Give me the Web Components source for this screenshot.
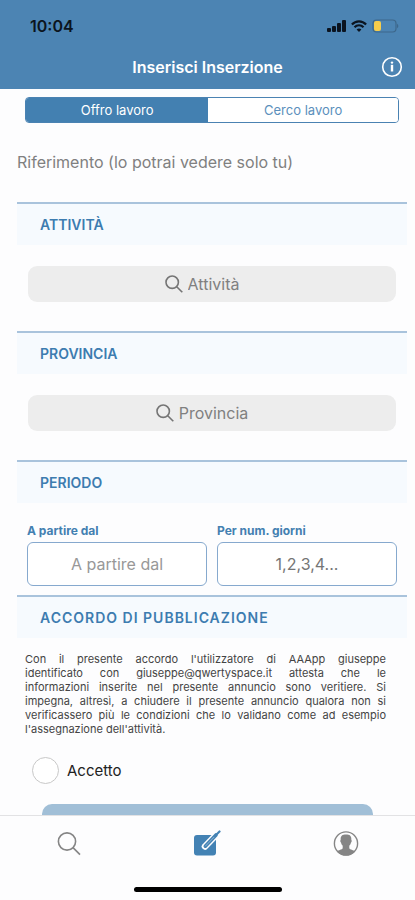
<!DOCTYPE html>
<html lang="it">
<head>
<meta charset="utf-8">
<meta name="viewport" content="width=device-width, initial-scale=1">
<title>Inserisci Inserzione</title>
<style>
  body {
    margin: 0;
    font-family: Inter, "Liberation Sans", sans-serif;
    color: #222;
    background: #fdfdfe;
  }
</style>
</head>
<body>
<app-shell>
  <status-bar slot="top" time="10:04"></status-bar>
  <nav-header slot="top">Inserisci Inserzione</nav-header>

  <segmented-control options="Offro lavoro,Cerco lavoro"></segmented-control>
  <reference-field placeholder="Riferimento (lo potrai vedere solo tu)"></reference-field>

  <form-section heading="ATTIVITÀ">
    <search-field label="Attività"></search-field>
  </form-section>
  <form-section heading="PROVINCIA">
    <search-field label="Provincia"></search-field>
  </form-section>
  <form-section heading="PERIODO">
    <period-fields>
      <text-field label="A partire dal" placeholder="A partire dal"></text-field>
      <text-field label="Per num. giorni" placeholder="1,2,3,4..." class="dark"></text-field>
    </period-fields>
  </form-section>
  <form-section heading="ACCORDO DI PUBBLICAZIONE" class="wide">
    <agreement-box>
      <span>Con il presente accordo l'utilizzatore di AAApp giuseppe</span>
      <span>identificato con giuseppe@qwertyspace.it attesta che le</span>
      <span>informazioni inserite nel presente annuncio sono veritiere. Si</span>
      <span>impegna, altresì, a chiudere il presente annuncio qualora non si</span>
      <span>verificassero più le condizioni che lo validano come ad esempio</span>
      <span>l'assegnazione dell'attività.</span>
    </agreement-box>
    <round-check>Accetto</round-check>
  </form-section>
  <submit-button></submit-button>

  <tab-bar slot="bottom"></tab-bar>
</app-shell>

<script>
class AppShell extends HTMLElement {
  constructor() {
    super();
    this.attachShadow({ mode: "open" });
    this.shadowRoot.innerHTML = `
      <style>
        :host {
          display: flex;
          flex-direction: column;
          height: 100vh;
        }
        header {
          background: #4c84b3;
        }
        main {
          flex: 1;
          min-height: 0;
          overflow-y: auto;
          scrollbar-width: none;
        }
      </style>
      <header><slot name="top"></slot></header>
      <main><slot></slot></main>
      <slot name="bottom"></slot>`;
  }
}

class StatusBar extends HTMLElement {
  constructor() {
    super();
    this.attachShadow({ mode: "open" });
    this.shadowRoot.innerHTML = `
      <style>
        :host {
          display: flex;
          align-items: center;
          justify-content: space-between;
          height: 36px;
          padding: 8px 16px 0 30px;
          color: #0b1420;
        }
        time {
          font-size: 16px;
          font-weight: 600;
        }
        .icons {
          display: flex;
          align-items: center;
          gap: 5px;
        }
        svg {
          display: block;
        }
      </style>
      <time>${this.getAttribute("time")}</time>
      <div class="icons">
        <svg width="19" height="12" viewBox="0 0 19 12" fill="currentColor">
          <rect x="0" y="8" width="4" height="4" rx="1"/>
          <rect x="5" y="6" width="4" height="6" rx="1"/>
          <rect x="10" y="3" width="4" height="9" rx="1"/>
          <rect x="15" y="0" width="4" height="12" rx="1"/>
        </svg>
        <svg width="16" height="12" viewBox="0 0 16 12" fill="none" stroke="currentColor" stroke-width="2.2">
          <path d="M.9 4.5C4.8.3 11.2.3 15.1 4.5"/>
          <path d="M3.5 7.2c2.5-2.6 6.5-2.6 9 0"/>
          <path d="M8 12 5.6 9.5c1.4-1.3 3.4-1.3 4.8 0Z" fill="currentColor" stroke="none"/>
        </svg>
        <svg width="27" height="14" viewBox="0 0 27 14">
          <rect x="1" y="1" width="23" height="12" rx="3.5" fill="none" stroke="#3d678b" stroke-width="1.2"/>
          <path d="M25 4.8c1.8.8 1.8 3.6 0 4.4Z" fill="#3d678b"/>
          <rect x="2" y="2" width="7" height="10" rx="2" fill="#f6cd4c"/>
        </svg>
      </div>`;
  }
}

class NavHeader extends HTMLElement {
  constructor() {
    super();
    this.attachShadow({ mode: "open" });
    this.shadowRoot.innerHTML = `
      <style>
        :host {
          display: grid;
          grid-template-columns: 1fr auto 1fr;
          align-items: center;
          height: 45px;
          padding: 0 12px;
          color: #fff;
        }
        h1 {
          grid-column: 2;
          margin: 0;
          font-size: 16px;
          font-weight: 600;
        }
        button {
          justify-self: end;
          padding: 0;
          border: 0;
          background: none;
          color: inherit;
        }
        svg {
          display: block;
        }
      </style>
      <h1><slot></slot></h1>
      <button type="button">
        <svg width="22" height="22" viewBox="0 0 22 22" fill="none" stroke="currentColor">
          <circle cx="11" cy="11" r="9.3" stroke-width="1.6"/>
          <path d="M11 8.8v6.7" stroke-width="2.4"/>
          <circle cx="11" cy="6.6" r="1.2" fill="currentColor" stroke="none"/>
        </svg>
      </button>`;
  }
}

class SegmentedControl extends HTMLElement {
  constructor() {
    super();
    this.attachShadow({ mode: "open" });
    const options = this.getAttribute("options").split(",");
    this.shadowRoot.innerHTML = `
      <style>
        :host {
          display: grid;
          grid-template-columns: 49fr 51fr;
          height: 24px;
          margin: 8px 16px 0 25px;
          border: 1px solid #4a82b2;
          border-radius: 4px;
          overflow: hidden;
        }
        button {
          padding: 0;
          border: 0;
          background: #fff;
          color: #5b8fbc;
          font: 13px Inter, sans-serif;
        }
        button[aria-pressed="true"] {
          background: #4380b1;
          color: #fff;
        }
      </style>
      ${options.map((o, i) => `<button type="button" aria-pressed="${i === 0}">${o}</button>`).join("")}`;
    this.shadowRoot.querySelectorAll("button").forEach(b => b.addEventListener("click", this._select));
  }

  _select = e => {
    this.shadowRoot.querySelectorAll("button").forEach(b => {
      b.setAttribute("aria-pressed", b === e.currentTarget);
    });
  };
}

class ReferenceField extends HTMLElement {
  constructor() {
    super();
    this.attachShadow({ mode: "open" });
    const text = this.getAttribute("placeholder");
    this.shadowRoot.innerHTML = `
      <style>
        :host {
          display: block;
          padding: 19px 8px 20px 17px;
        }
        input {
          box-sizing: border-box;
          display: block;
          width: 100%;
          height: 40px;
          padding: 0;
          border: 0;
          outline: 0;
          background: none;
          font: 16px Inter, sans-serif;
        }
        input::placeholder {
          color: #808080;
        }
      </style>
      <input type="text" aria-label="${text}" placeholder="${text}">`;
  }
}

class FormSection extends HTMLElement {
  constructor() {
    super();
    this.attachShadow({ mode: "open" });
    this.shadowRoot.innerHTML = `
      <style>
        :host {
          display: block;
        }
        h2 {
          display: flex;
          align-items: center;
          height: 41px;
          margin: 0 8px 0 17px;
          padding: 0 23px;
          border-top: 2px solid #a9c3dc;
          background: #f6fafe;
          color: #3d7cb0;
          font-size: 14px;
          font-weight: 600;
          letter-spacing: var(--heading-tracking, normal);
        }
        :host(.wide) {
          --heading-tracking: 1px;
        }
      </style>
      <h2>${this.getAttribute("heading")}</h2>
      <slot></slot>`;
  }
}

class SearchField extends HTMLElement {
  constructor() {
    super();
    this.attachShadow({ mode: "open" });
    const label = this.getAttribute("label");
    this.shadowRoot.innerHTML = `
      <style>
        :host {
          display: block;
          padding: 21px 19px 29px 28px;
        }
        label {
          display: flex;
          align-items: center;
          justify-content: center;
          gap: 5px;
          height: 36px;
          padding-right: 20px;
          border-radius: 9px;
          background: #ededed;
          color: #757575;
        }
        input {
          field-sizing: content;
          padding: 0;
          border: 0;
          outline: 0;
          background: none;
          font: 16px Inter, sans-serif;
        }
        input::placeholder {
          color: #808080;
        }
      </style>
      <label>
        <svg width="18" height="18" viewBox="0 0 18 18" fill="none" stroke="currentColor" stroke-width="1.6">
          <circle cx="7.2" cy="7.2" r="6.2"/>
          <path d="m11.7 11.7 5.6 5.6"/>
        </svg>
        <input type="text" aria-label="${label}" placeholder="${label}">
      </label>`;
  }
}

class PeriodFields extends HTMLElement {
  constructor() {
    super();
    this.attachShadow({ mode: "open" });
    this.shadowRoot.innerHTML = `
      <style>
        :host {
          display: grid;
          grid-template-columns: 1fr 1fr;
          gap: 10px;
          padding: 20px 18px 9px 27px;
        }
      </style>
      <slot></slot>`;
  }
}

class TextField extends HTMLElement {
  constructor() {
    super();
    this.attachShadow({ mode: "open" });
    this.shadowRoot.innerHTML = `
      <style>
        :host {
          display: block;
          --hint: #989898;
        }
        :host(.dark) {
          --hint: #757575;
        }
        label {
          display: block;
          height: 19px;
          color: #4380b1;
          font-size: 12px;
          font-weight: 700;
          line-height: 16px;
        }
        input {
          box-sizing: border-box;
          display: block;
          width: 100%;
          height: 44px;
          border: 1px solid #86a9ce;
          border-radius: 6px;
          background: #fff;
          font: 16px Inter, sans-serif;
          text-align: center;
        }
        input::placeholder {
          color: var(--hint);
        }
      </style>
      <label for="field">${this.getAttribute("label")}</label>
      <input id="field" type="text" placeholder="${this.getAttribute("placeholder")}">`;
  }
}

class AgreementBox extends HTMLElement {
  constructor() {
    super();
    this.attachShadow({ mode: "open" });
    this.shadowRoot.innerHTML = `
      <style>
        :host {
          display: block;
          padding: 14px 29px 0 25px;
        }
        p {
          margin: 0;
          color: #444;
          font-size: 11px;
          line-height: 14px;
          text-align: justify;
        }
        ::slotted(span) {
          display: block;
        }
        ::slotted(span:not(:last-child)) {
          text-align-last: justify;
        }
      </style>
      <p><slot></slot></p>`;
  }
}

class RoundCheck extends HTMLElement {
  constructor() {
    super();
    this.attachShadow({ mode: "open" });
    this.shadowRoot.innerHTML = `
      <style>
        :host {
          display: block;
          padding: 21px 32px 16px;
        }
        label {
          display: inline-flex;
          align-items: center;
          gap: 8px;
          font-size: 15px;
        }
        input {
          appearance: none;
          box-sizing: border-box;
          width: 27px;
          height: 27px;
          margin: 0;
          border: 1px solid #c8c8c8;
          border-radius: 50%;
          background: #fff;
        }
        input:checked {
          background: #4380b1;
        }
      </style>
      <label><input type="checkbox"><slot></slot></label>`;
  }
}

class SubmitButton extends HTMLElement {
  constructor() {
    super();
    this.attachShadow({ mode: "open" });
    this.shadowRoot.innerHTML = `
      <style>
        :host {
          display: block;
          padding: 0 42px 24px;
        }
        button {
          display: block;
          width: 100%;
          height: 44px;
          border: 0;
          border-radius: 10px;
          background: #a1bfd7;
        }
      </style>
      <button type="button" disabled></button>`;
  }
}

class TabBar extends HTMLElement {
  constructor() {
    super();
    this.attachShadow({ mode: "open" });
    this.shadowRoot.innerHTML = `
      <style>
        :host {
          display: block;
          border-top: 1px solid #e2e2e4;
          background: #fdfdfe;
        }
        nav {
          display: grid;
          grid-template-columns: 1fr 1fr 1fr;
          height: 56px;
        }
        a {
          display: flex;
          align-items: center;
          justify-content: center;
          color: #858585;
        }
        a[aria-current] {
          color: #4382b4;
        }
        .home {
          width: 148px;
          height: 5px;
          margin: 15px auto 8px;
          border-radius: 3px;
          background: #000;
        }
      </style>
      <nav>
        <a href="#cerca">
          <svg width="24" height="24" viewBox="0 0 24 24" fill="none" stroke="currentColor" stroke-width="1.6">
            <circle cx="10" cy="9.5" r="8.6"/>
            <path d="m16 15.6 7 7"/>
          </svg>
        </a>
        <a href="#inserisci" aria-current="page">
          <svg width="28" height="28" viewBox="0 0 28 28" fill="none" stroke-linecap="round">
            <rect x="1" y="5" width="22" height="20.5" rx="3" fill="currentColor"/>
            <path d="M12 16.5 24.5 3.5" stroke="#fdfdfe" stroke-width="6.5"/>
            <path d="M12.3 16.2 23 5" stroke="currentColor" stroke-width="3.6"/>
            <path d="M12.5 16 21 7.2" stroke="#8db3d2" stroke-width="1"/>
            <path d="M24 4 26.5 1.5" stroke="currentColor" stroke-width="2.2"/>
          </svg>
        </a>
        <a href="#profilo">
          <svg width="26" height="26" viewBox="0 0 26 26">
            <circle cx="13" cy="12.5" r="11.6" fill="none" stroke="currentColor" stroke-width="1.4"/>
            <path d="M13 3.5c4 0 5.6 1.5 5.3 5.3.6.4.5 2.2-.3 2.8-.3 1.5-.9 2.5-1.7 3.2v2.4c.6 1.500 4.300 1.600 5.700 3.200a12 12 0 0 1-18 0c1.400-1.600 5.100-1.700 5.700-3.200v-2.400c-.8-.7-1.400-1.700-1.700-3.200-.8-.6-.9-2.400-.3-2.800C7.400 5 9 3.500 13 3.500Z" fill="currentColor"/>
          </svg>
        </a>
      </nav>
      <div class="home"></div>`;
  }
}

customElements.define("app-shell", AppShell);
customElements.define("status-bar", StatusBar);
customElements.define("nav-header", NavHeader);
customElements.define("segmented-control", SegmentedControl);
customElements.define("reference-field", ReferenceField);
customElements.define("form-section", FormSection);
customElements.define("search-field", SearchField);
customElements.define("period-fields", PeriodFields);
customElements.define("text-field", TextField);
customElements.define("agreement-box", AgreementBox);
customElements.define("round-check", RoundCheck);
customElements.define("submit-button", SubmitButton);
customElements.define("tab-bar", TabBar);
</script>
</body>
</html>
